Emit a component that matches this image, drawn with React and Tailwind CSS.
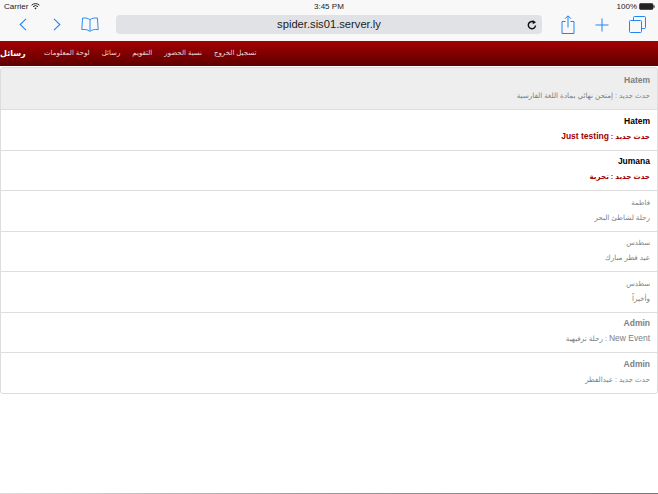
const rows = [
  { name: "Hatem", text: "حدث جديد : إمتحن نهائي بمادة اللغة الفارسية", active: true },
  { name: "Hatem", latin: "Just testing", pre: "حدث جديد : ", unread: true },
  { name: "Jumana", text: "حدث جديد : تجربة", unread: true },
  { name: "فاطمة", ar: true, text: "رحلة لشاطئ البحر" },
  { name: "سطدس", ar: true, text: "عيد فطر مبارك" },
  { name: "سطدس", ar: true, text: "وأخيراً" },
  { name: "Admin", latin: "New Event", post: " : رحلة ترفيهية" },
  { name: "Admin", text: "حدث جديد : عيدالفطر" },
];

function Row({ r, first, last }) {
  const nameC = r.unread ? "text-black font-bold" : "text-[#808080] font-bold";
  const textC = r.unread ? "text-[#a00000] font-bold" : "text-[#808080]";
  return (
    <div
      dir="rtl"
      className={`flex flex-col border border-[#ddd] px-[7px] ${first ? "rounded-t-[3px] h-[43px] pt-[7px]" : "-mt-px h-[41.5px] pt-[5.5px]"} ${last ? "rounded-b-[3px]" : ""} ${r.active ? "bg-[#eeeeee]" : "bg-white"}`}
    >
      <div className={`h-[11px] leading-[11px] ${r.ar ? "text-[7px] font-normal text-[#808080]" : `text-[8.5px] ${nameC}`}`}>{r.name}</div>
      <div className={`mt-[4px] h-[11px] text-[7.2px] leading-[11px] ${textC}`}>
        {r.pre}
        {r.latin ? <span className="text-[8.5px]">{r.latin}</span> : null}
        {r.post}
        {r.text}
      </div>
    </div>
  );
}

export default function App() {
  return (
    <div className="relative h-[494px] w-[658px] overflow-hidden bg-white font-['Liberation_Sans','DejaVu_Sans',sans-serif]">
      <div className="bg-[#f8f8f8] h-[41px]">
        <div className="relative flex h-[13px] items-center justify-between pl-[4px] pr-[3px] text-[8px] font-medium text-[#222]">
          <div className="flex items-center gap-[3px]">
            <span>Carrier</span>
            <svg width="9" height="7" viewBox="0 0 9 7" fill="none" stroke="#222" strokeWidth="1">
              <path d="M.6 2.200a5.600 5.600 0 0 1 7.800 0M2 3.700a3.600 3.600 0 0 1 5 0" />
              <path d="M3.400 5.100a1.600 1.600 0 0 1 2.200 0L4.500 6.400z" fill="#222" stroke="none" />
            </svg>
          </div>
          <span className="absolute left-[314px] top-[1px] leading-[12px]">3:45 PM</span>
          <div className="flex items-center gap-[2px]">
            <span>100%</span>
            <svg width="16" height="7" viewBox="0 0 16 7">
              <rect x=".5" y=".5" width="13.500" height="6" rx="1.200" fill="#222" stroke="#222" strokeWidth=".6" />
              <rect x="14.400" y="2.200" width="1.200" height="2.600" rx=".5" fill="#222" />
            </svg>
          </div>
        </div>
        <div className="flex h-[23px] items-center">
          <div className="flex w-[116px] items-center">
            <svg className="ml-[19px]" width="8" height="13" viewBox="0 0 8 13" fill="none" stroke="#1f86f2" strokeWidth="1.100">
              <path d="M7 .8 1.200 6.500 7 12.200" />
            </svg>
            <svg className="ml-[26px]" width="8" height="13" viewBox="0 0 8 13" fill="none" stroke="#1f86f2" strokeWidth="1.100">
              <path d="M1 .8l5.800 5.700L1 12.200" />
            </svg>
            <svg className="ml-[20px]" width="18" height="16" viewBox="0 0 19 17" fill="none" stroke="#1f86f2" strokeWidth="1">
              <path d="M9.500 3C8 1.300 5 .8 1.600 1.100L.8 13.400c3.500-.4 6.400 0 8 1.600.3.300.8.300 1.200 0 1.600-1.600 4.500-2 8.200-1.600l-.8-12.300C14 .8 11 1.300 9.500 3zm0 0v12" />
            </svg>
          </div>
          <div className="relative flex h-[19px] w-[426px] items-center justify-center rounded-[4px] bg-[#e1e2e6] text-[11.2px] text-[#222]">
            spider.sis01.server.ly
            <svg className="absolute right-[5px] top-[5px]" width="10" height="10" viewBox="0 0 10 10" fill="none" stroke="#111" strokeWidth="1.500">
              <path d="M8.500 5.500A3.600 3.600 0 1 1 6.600 1.900" />
              <path d="M5.600.1 9 2.200 5.800 4.200z" fill="#111" stroke="none" />
            </svg>
          </div>
          <svg className="ml-[19px]" width="14" height="19" viewBox="0 0 14 19" fill="none" stroke="#1f86f2" strokeWidth="1">
            <path d="M4.500 6.500H1v12h12v-12H9.500M7 12.500V1M4 3.800 7 .8l3 3" />
          </svg>
          <svg className="ml-[20px]" width="14" height="14" viewBox="0 0 14 14" fill="none" stroke="#1f86f2" strokeWidth="1">
            <path d="M7 .5v13M.5 7h13" />
          </svg>
          <svg className="ml-[20px]" width="17" height="17" viewBox="0 0 17 17" fill="none" stroke="#1f86f2" strokeWidth="1">
            <path d="M4.500 4.500V1.500a1 1 0 0 1 1-1h10a1 1 0 0 1 1 1v10a1 1 0 0 1-1 1h-3" />
            <rect x=".5" y="4.500" width="12" height="12" rx="1" />
          </svg>
        </div>
      </div>

      <div className="flex h-[25px] items-center bg-gradient-to-b from-[#a50000] to-[#5f0000] text-white">
        <span className="w-[44px] shrink-0 text-[8px] font-bold">رسائل</span>
        <nav className="flex items-center gap-[12px] text-[7px] text-[#e8d8d8]">
          <span>لوحة المعلومات</span>
          <span>رسائل</span>
          <span>التقويم</span>
          <span>نسبة الحضور</span>
          <span>تسجيل الخروج</span>
        </nav>
      </div>

      <div className="mt-px">
        {rows.map((r, i) => (
          <Row key={i} r={r} first={i === 0} last={i === rows.length - 1} />
        ))}
      </div>

      <div className="absolute bottom-0 left-0 h-px w-full bg-gradient-to-r from-[#ddd] via-[#999] to-[#777]" />
    </div>
  );
}
